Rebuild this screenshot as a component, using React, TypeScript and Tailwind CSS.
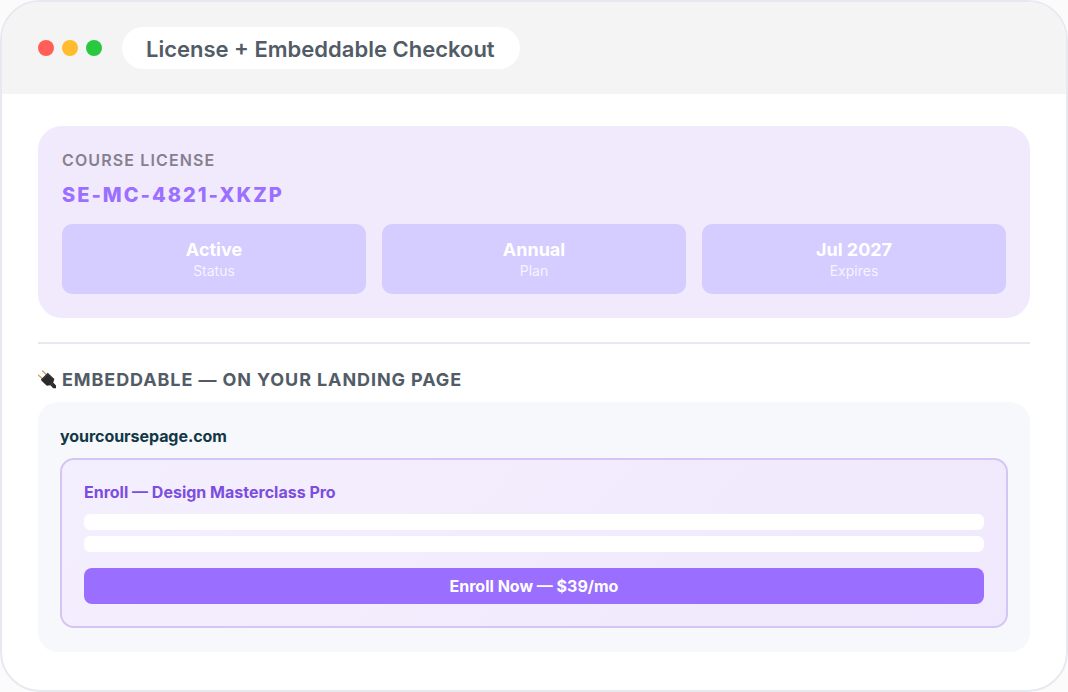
import React from "react";

const stats = [
  { value: "Active", label: "Status" },
  { value: "Annual", label: "Plan" },
  { value: "Jul 2027", label: "Expires" },
];

function PlugIcon() {
  return (
    <svg className="h-[19px] w-[18px] shrink-0" viewBox="0 0 18 19" fill="none">
      <path d="M0.5 5.2L4.8 9M4.6 1L8.8 5" stroke="#c2a356" strokeWidth="1.2" strokeLinecap="round" />
      <path d="M2.9 9.6L9.8 2.8L11.3 4.2L16.4 9.1L15.2 12.6L18 15.6V18.2H15.2L12.4 15.2L8.8 15.8L4 11.3Z" fill="#2b2b2b" />
      <path d="M4.4 9.6L9.8 4.3L14.9 9.2" stroke="#484848" strokeWidth="0.7" />
      <path d="M12.8 14.8L14.6 13.1" stroke="#666666" strokeWidth="0.6" />
    </svg>
  );
}

function TitleBar() {
  return (
    <div className="flex h-[92px] items-center bg-[#f4f4f4] px-9">
      <div className="flex gap-2">
        <span className="h-4 w-4 rounded-full bg-[#ff5f57]" />
        <span className="h-4 w-4 rounded-full bg-[#febc2e]" />
        <span className="h-4 w-4 rounded-full bg-[#28c840]" />
      </div>
      <div className="ml-5 flex h-[42px] w-[398px] items-center rounded-full bg-white pl-6 pt-0.5 text-[22px] leading-[26px] font-semibold whitespace-nowrap text-[#525c66]">
        License + Embeddable Checkout
      </div>
    </div>
  );
}

function LicenseCard() {
  return (
    <div className="h-48 rounded-3xl bg-[#f1eafd] p-6">
      <p className="text-base leading-5 font-semibold tracking-[1.13px] text-[#85808f]">COURSE LICENSE</p>
      <p className="mt-2 h-[34px] text-xl leading-[34px] font-extrabold tracking-[2px] text-[#9b6fff]">SE-MC-4821-XKZP</p>
      <div className="mt-3 grid grid-cols-3 gap-4">
        {stats.map((s) => (
          <div key={s.label} className="h-[70px] rounded-[10px] bg-[#d5ccff] pt-[15px] text-center text-white">
            <p className="text-lg leading-[22px] font-bold">{s.value}</p>
            <p className="text-sm leading-[20px] opacity-80">{s.label}</p>
          </div>
        ))}
      </div>
    </div>
  );
}

function EmbedPreview() {
  return (
    <div className="mt-3 h-[250px] rounded-[20px] bg-[#f6f8fc] px-[22px] pt-6">
      <p className="text-base leading-5 font-bold tracking-[-0.05px] text-[#123745]">yourcoursepage.com</p>
      <div className="mt-3 h-[170px] rounded-[14px] border-2 border-[#d5c5f5] bg-linear-135 from-[#f4effe] to-[#f0e8fc] px-[22px] pt-[22px]">
        <p className="text-base leading-5 font-bold text-[#7c4ddf]">Enroll — Design Masterclass Pro</p>
        <div className="mt-3 h-4 rounded-md bg-white" />
        <div className="mt-1.5 h-4 rounded-md bg-white" />
        <button className="mt-4 block h-9 w-full rounded-lg bg-[#9a6fff] text-base leading-9 font-bold text-white">
          Enroll Now — $39/mo
        </button>
      </div>
    </div>
  );
}

export default function App() {
  return (
    <div className="h-[692px] w-[1068px] bg-[#fbfbfc] font-['Inter',sans-serif]">
      <div className="h-full overflow-hidden rounded-[40px] border-2 border-[#e6eaf0] bg-white">
        <TitleBar />
        <div className="px-9 pt-8">
          <LicenseCard />
          <div className="mt-6 h-0.5 bg-[#e6eaf0]" />
          <div className="mt-6 flex h-[22px] items-center gap-1.5">
            <PlugIcon />
            <p className="pt-0.5 text-lg leading-[22px] font-bold tracking-[0.9px] whitespace-nowrap text-[#525c66]">
              EMBEDDABLE — ON YOUR LANDING PAGE
            </p>
          </div>
          <EmbedPreview />
        </div>
      </div>
    </div>
  );
}
